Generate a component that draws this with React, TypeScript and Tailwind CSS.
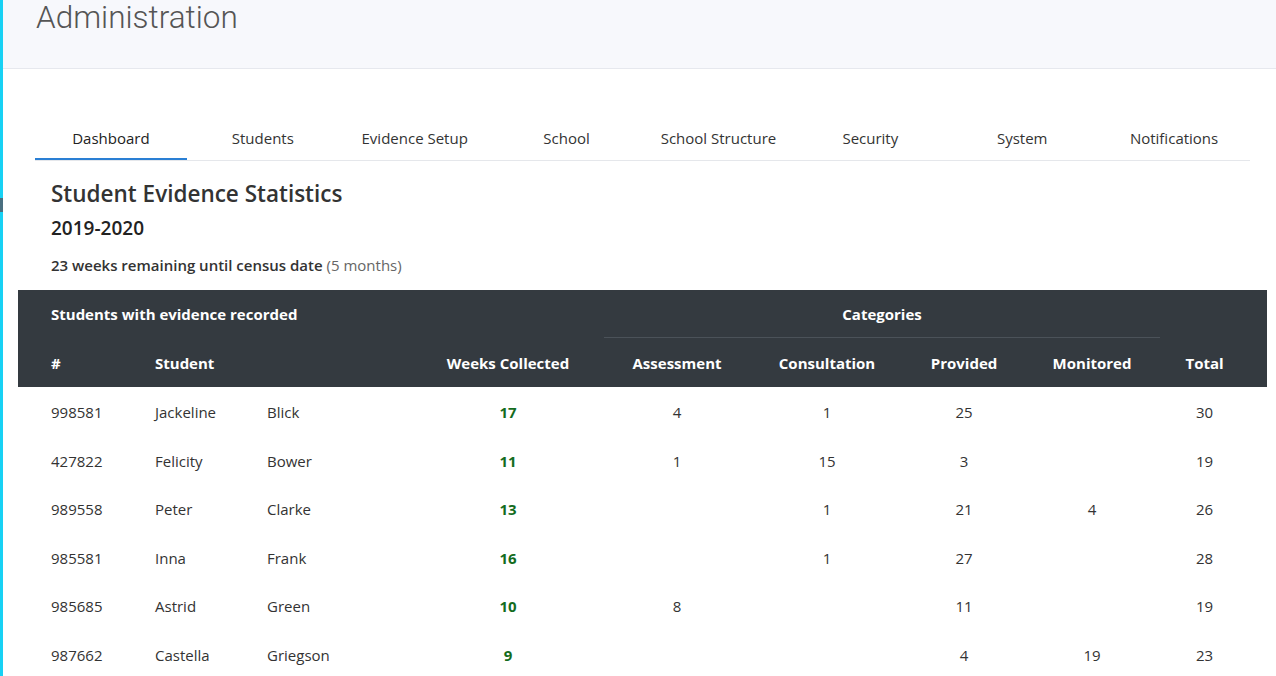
import React from "react";

const tabs = [
  "Dashboard",
  "Students",
  "Evidence Setup",
  "School",
  "School Structure",
  "Security",
  "System",
  "Notifications",
];

type Row = {
  id: string;
  first: string;
  last: string;
  weeks: number;
  assessment?: number;
  consultation?: number;
  provided?: number;
  monitored?: number;
  total: number;
};

const rows: Row[] = [
  { id: "998581", first: "Jackeline", last: "Blick", weeks: 17, assessment: 4, consultation: 1, provided: 25, total: 30 },
  { id: "427822", first: "Felicity", last: "Bower", weeks: 11, assessment: 1, consultation: 15, provided: 3, total: 19 },
  { id: "989558", first: "Peter", last: "Clarke", weeks: 13, consultation: 1, provided: 21, monitored: 4, total: 26 },
  { id: "985581", first: "Inna", last: "Frank", weeks: 16, consultation: 1, provided: 27, total: 28 },
  { id: "985685", first: "Astrid", last: "Green", weeks: 10, assessment: 8, provided: 11, total: 19 },
  { id: "987662", first: "Castella", last: "Griegson", weeks: 9, provided: 4, monitored: 19, total: 23 },
];

export default function App() {
  return (
    <div
      className="flex w-[1276px] h-[676px] overflow-hidden bg-white text-[#333] relative"
      style={{ fontFamily: '"Open Sans", "Noto Sans", sans-serif' }}
    >
      {/* left accent bar */}
      <div className="w-[3px] shrink-0 bg-[#17d1f4]" />
      <div className="absolute left-0 top-[198px] w-[3px] h-[14px] bg-[#4a6f80]" />

      <div className="flex-1 flex flex-col">
        {/* page header */}
        <div className="h-[69px] shrink-0 bg-[#f7f8fc] border-b border-[#e6e8ee] pl-[33px] pt-px">
          <h1
            className="text-[31.5px] leading-[34px] text-[#555]"
            style={{ fontFamily: 'Roboto, "Open Sans", sans-serif', fontWeight: 300 }}
          >
            Administration
          </h1>
        </div>

        {/* tabs */}
        <div className="ml-[32px] w-[1215px] mt-[47px] flex border-b border-[#e5e7eb]">
          {tabs.map((t, i) => (
            <div
              key={t}
              className={
                "flex-1 text-center text-[15px] h-[44px] leading-[44px] " +
                (i === 0 ? "border-b-2 border-[#2a7fd4] -mb-px text-[#222]" : "text-[#333]")
              }
            >
              {t}
            </div>
          ))}
        </div>

        {/* stats heading */}
        <div className="pl-[48px] pt-[16px]">
          <h2 className="text-[22.5px] font-semibold leading-[34px] text-[#333]">Student Evidence Statistics</h2>
          <h3 className="text-[19px] font-semibold leading-[30px] mt-[2px] text-[#222]">2019-2020</h3>
          <p className="text-[15px] font-semibold leading-[20px] mt-[12px] text-[#333]">
            23 weeks remaining until census date <span className="font-normal text-[#666]">(5 months)</span>
          </p>
        </div>

        {/* table */}
        <table className="ml-[15px] mt-[15px] w-[1249px] table-fixed border-collapse text-[15px]">
          <colgroup>
            <col className="w-[104px]" />
            <col className="w-[112px]" />
            <col className="w-[178px]" />
            <col className="w-[192px]" />
            <col className="w-[146px]" />
            <col className="w-[154px]" />
            <col className="w-[120px]" />
            <col className="w-[136px]" />
            <col className="w-[107px]" />
          </colgroup>
          <thead className="bg-[#343a40] text-white font-bold">
            <tr className="h-[48px]">
              <th colSpan={4} className="text-left pl-[33px] text-[15px]">Students with evidence recorded</th>
              <th colSpan={5} className="p-0 text-[15px]">
                <div className="flex">
                  <div className="w-[556px] h-[48px] leading-[48px] text-center border-b border-[#4b5259]">Categories</div>
                  <div className="flex-1" />
                </div>
              </th>
            </tr>
            <tr className="h-[49px]">
              <th className="text-left pl-[33px] pt-[2px]">#</th>
              <th className="text-left pl-[33px] pt-[2px]" colSpan={2}>Student</th>
              <th className="text-center pt-[2px]">Weeks Collected</th>
              <th className="text-center pt-[2px]">Assessment</th>
              <th className="text-center pt-[2px]">Consultation</th>
              <th className="text-center pt-[2px]">Provided</th>
              <th className="text-center pt-[2px]">Monitored</th>
              <th className="text-center pr-[18px] pt-[2px]">Total</th>
            </tr>
          </thead>
          <tbody>
            {rows.map((r) => (
              <tr key={r.id} className="h-[48.5px]">
                <td className="pl-[33px] pt-[2px]">{r.id}</td>
                <td className="pl-[33px] pt-[2px]">{r.first}</td>
                <td className="pl-[33px] pt-[2px]">{r.last}</td>
                <td className="text-center font-bold text-[#146c1e] pt-[2px]">{r.weeks}</td>
                <td className="text-center pt-[2px]">{r.assessment ?? ""}</td>
                <td className="text-center pt-[2px]">{r.consultation ?? ""}</td>
                <td className="text-center pt-[2px]">{r.provided ?? ""}</td>
                <td className="text-center pt-[2px]">{r.monitored ?? ""}</td>
                <td className="text-center pr-[18px] pt-[2px]">{r.total}</td>
              </tr>
            ))}
          </tbody>
        </table>
      </div>
    </div>
  );
}
